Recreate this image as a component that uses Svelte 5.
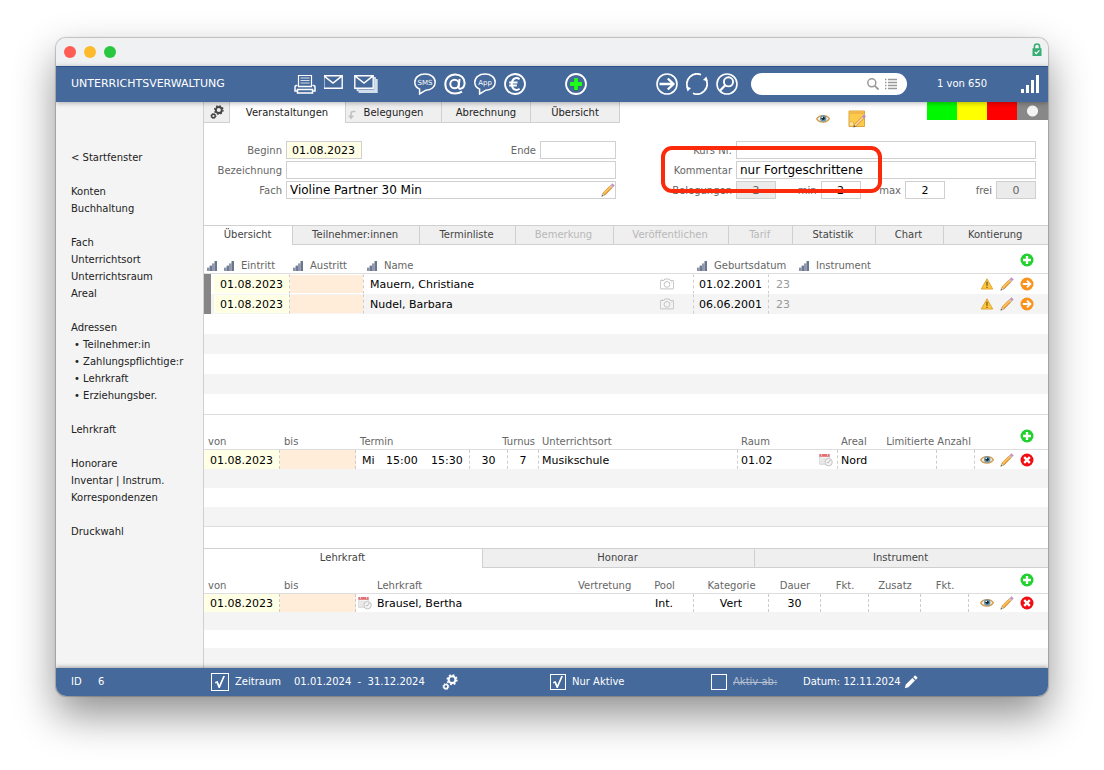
<script>
  const menu = [
    ['< Startfenster'],
    ['Konten', 'Buchhaltung'],
    ['Fach', 'Unterrichtsort', 'Unterrichtsraum', 'Areal'],
    ['Adressen', '• Teilnehmer:in', '• Zahlungspflichtige:r', '• Lehrkraft', '• Erziehungsber.'],
    ['Lehrkraft'],
    ['Honorare', 'Inventar | Instrum.', 'Korrespondenzen'],
    ['Druckwahl']
  ];

  const subTabs = [
    { name: 'Übersicht', size: 88 },
    { name: 'Teilnehmer:innen', size: 128 },
    { name: 'Terminliste', size: 96 },
    { name: 'Bemerkung', size: 98, disabled: true },
    { name: 'Veröffentlichen', size: 116, disabled: true },
    { name: 'Tarif', size: 63, disabled: true },
    { name: 'Statistik', size: 82 },
    { name: 'Chart', size: 68 },
    { name: 'Kontierung', size: 105 }
  ];

  const bottomTabs = [
    { name: 'Lehrkraft', size: 278 },
    { name: 'Honorar', size: 272 },
    { name: 'Instrument', size: 294 }
  ];

  const teilnehmer = [
    { eintritt: '01.08.2023', name: 'Mauern, Christiane', geburt: '01.02.2001', alter: 23 },
    { eintritt: '01.08.2023', name: 'Nudel, Barbara', geburt: '06.06.2001', alter: 23 }
  ];

  let subTab = $state('Übersicht');
  let bottomTab = $state('Lehrkraft');

  let suche = $state('');
  let kurs = $state({
    beginn: '01.08.2023',
    ende: '',
    bezeichnung: '',
    fach: 'Violine Partner 30 Min',
    nr: '',
    kommentar: 'nur Fortgeschrittene',
    min: '2',
    max: '2'
  });

  let zeitraum = $state(true);
  let nurAktive = $state(true);
  let aktivAb = $state(false);
</script>

{#snippet gears(size)}
  <svg width={size} height={size} viewBox="0 0 14 14" fill="none" stroke="currentColor">
    <circle cx="8.8" cy="5" r="3" stroke-width="1.8" />
    <circle cx="8.8" cy="5" r="4.2" stroke-width="1.4" stroke-dasharray="1.6 1.7" />
    <circle cx="3.4" cy="11" r="1.8" stroke-width="1.4" />
    <circle cx="3.4" cy="11" r="2.6" stroke-width="0.8" stroke-dasharray="1 1.04" />
  </svg>
{/snippet}

{#snippet sortBars()}
  <svg width="10" height="10" viewBox="0 0 10 10">
    <path d="M0 6.6h2.6V10H0z" fill="#8a93a8" />
    <path d="M2.6 4.6h2.4V10H2.600z" fill="#6f7a92" />
    <path d="M5 2.400h2.500V10H5z" fill="#8f98ac" />
    <path d="M7.500 0H10v10H7.500z" fill="#6b758d" />
  </svg>
{/snippet}

{#snippet plus()}
  <svg width="14" height="14" viewBox="0 0 14 14">
    <circle cx="7" cy="7" r="6.5" fill="#1fd12b" />
    <path d="M7 3v8M3 7h8" stroke="#fff" stroke-width="2.4" />
  </svg>
{/snippet}

{#snippet pencil()}
  <svg width="14" height="14" viewBox="0 0 14 14">
    <path d="M3 11 10.8 3.2" stroke="#cf7f22" stroke-width="3.2" />
    <path d="M2.8 10.8 10.600 3" stroke="#fdbf58" stroke-width="2" />
    <path d="M.8 13.2 1.9 10 4 12.1z" fill="#e9cda0" stroke="#a98a60" stroke-width=".5" />
    <path d="M.6 13.4 1.2 12l.8.8z" fill="#333" />
    <path d="m9.900 4.100 1-1" stroke="#c9c9c9" stroke-width="3.200" />
    <path d="m10.900 3.100 1.700-1.700" stroke="#c893bd" stroke-width="3.200" />
  </svg>
{/snippet}

{#snippet eye()}
  <svg width="14" height="14" viewBox="0 0 14 14">
    <path d="M.7 6.8C3 2.6 10.8 2.4 13.400 6.600 11 11 3.400 11.400.7 6.800z" fill="#f2efe8" stroke="#cf9a4c" stroke-width="1.300" />
    <circle cx="7.200" cy="6.500" r="3.200" fill="#6793a8" />
    <circle cx="7.200" cy="6.300" r="1.600" fill="#16222c" />
    <circle cx="6.300" cy="5.400" r=".7" fill="#fff" />
  </svg>
{/snippet}

{#snippet warning()}
  <svg width="14" height="14" viewBox="0 0 14 14">
    <path d="M7 1.8 12.7 12H1.3z" fill="#fcc63a" stroke="#e0a535" stroke-linejoin="round" />
    <path d="M7 4.8v4M7 9.8v1.3" stroke="#7d631f" stroke-width="1.4" />
  </svg>
{/snippet}

{#snippet goTo()}
  <svg width="14" height="14" viewBox="0 0 14 14" fill="none" stroke="#fff" stroke-width="1.8">
    <circle cx="7" cy="7" r="6.5" fill="#fb921c" stroke="none" />
    <path d="M2.8 7h7.400M7 3.600 10.400 7 7 10.400" />
  </svg>
{/snippet}

{#snippet remove()}
  <svg width="14" height="14" viewBox="0 0 14 14">
    <circle cx="7" cy="7" r="6.5" fill="#f10d14" />
    <path d="m4.200 4.200 5.600 5.600M9.800 4.200 4.200 9.800" stroke="#fff" stroke-width="2.400" />
  </svg>
{/snippet}

{#snippet calendar()}
  <svg width="14" height="14" viewBox="0 0 14 14">
    <path d="M.7 1.5h9.600v9.800H.7z" fill="#f2f2f2" stroke="#c9c9c9" stroke-width=".7" />
    <path d="M.4 1h10.200v2.800H.4z" fill="#df7173" />
    <path d="M2.500 1.200v1.300M8.500 1.200v1.300" stroke="#fff" stroke-width=".8" />
    <path d="M2 6h7M2 8h5M2 10h3" stroke="#d8d8d8" stroke-width=".8" />
    <circle cx="9.600" cy="9.200" r="3.700" fill="#f4f4f4" stroke="#bdbdbd" stroke-width=".9" />
    <path d="m11.200 7-1.600 2.600H7.800" fill="none" stroke="#aaa" stroke-width=".8" />
  </svg>
{/snippet}

{#snippet camera()}
  <svg width="14" height="14" viewBox="0 0 14 14" fill="none" stroke="#bdbdbd" stroke-width=".9">
    <path d="M1 3.500h2.800l1-1.500h4.400l1 1.500H13q.6 0 .6.600v7.200q0 .6-.6.600H1q-.6 0-.6-.6V4.100q0-.6.6-.6z" />
    <circle cx="7" cy="7.400" r="2.900" />
    <path d="M11.300 5.300h1M1.600 2.900h1.200" />
  </svg>
{/snippet}

{#snippet tabRow(tabs, active, pick)}
  <div class="tabs">
    {#each tabs as tab}
      <button
        class="tab"
        class:active={tab.name === active}
        disabled={tab.disabled}
        style:flex-grow={tab.size}
        onclick={() => pick(tab.name)}>{tab.name}</button>
    {/each}
  </div>
{/snippet}

<div class="window">
  <div class="titlebar">
    <span class="dot close"></span>
    <span class="dot minimize"></span>
    <span class="dot zoom"></span>
    <svg class="lock" width="10" height="13" viewBox="0 0 10 13">
      <path d="M2.4 6V3.600q0-2.600 2.600-2.600t2.600 2.600V6" fill="none" stroke="#35ad75" stroke-width="1.600" />
      <path d="M.5 5.200h9V13h-9z" fill="#35ad75" />
      <path d="m2.800 9 1.500 1.600L7.400 7.300" fill="none" stroke="#fff" stroke-width="1.200" />
    </svg>
  </div>

  <header class="toolbar">
    <h1>UNTERRICHTSVERWALTUNG</h1>

    <div class="tools print">
      <button aria-label="Drucken">
        <svg width="22" height="22" viewBox="0 0 22 22" fill="none" stroke="#fff">
          <path d="M4.500 13V2.500h13V13" stroke-width="1.200" />
          <path d="M6.500 5h9M6.500 7.500h9M6.500 10h9" stroke="#d3deed" stroke-width="1.200" />
          <path d="M3.500 12.500h-1q-1.500 0-1.500 1.500v4h2.500M18.500 12.500h1q1.500 0 1.500 1.500v4h-2.500M4 13.500h14" stroke-width="1.500" />
          <path d="M3.500 16.500h15v3.500h-15z" stroke-width="1.500" />
        </svg>
      </button>
      <button aria-label="E-Mail">
        <svg width="22" height="22" viewBox="1 0 22 22" fill="none" stroke="#fff" stroke-width="1.400">
          <path d="M.8 2.700h18.400v12.600H.8zM1.500 3.400 10 10l8.500-6.600" />
        </svg>
      </button>
      <button aria-label="Serienmail">
        <svg width="24" height="22" viewBox="0 0 24 22" fill="none" stroke="#fff" stroke-width="1.400">
          <path d="M20 5h1v12.300H3.500V16M21.800 7h1v12H5.500v-1.500" stroke="#d3deed" stroke-width="1.800" />
          <path d="M.8 2.700h18.400v12.600H.8zM1.500 3.400 10 10l8.500-6.600" />
        </svg>
      </button>
    </div>

    <div class="tools contact">
      <button aria-label="SMS">
        <svg width="22" height="22" viewBox="0 0 22 22">
          <path d="M11 1c6 0 10.200 3.400 10.200 8.200s-4.200 8-9.400 8L5.600 21v-4.900C2.600 14.800.8 12.500.8 9.200.8 4.400 5 1 11 1z" fill="none" stroke="#fff" stroke-width="1.500" />
          <text x="11" y="12" font-size="7" fill="#fff" text-anchor="middle">SMS</text>
        </svg>
      </button>
      <button aria-label="Adresse">
        <svg width="22" height="22" viewBox="0 0 22 22" fill="none" stroke="#fff" stroke-width="2">
          <circle cx="10.600" cy="11" r="4.300" />
          <path d="m15.600 6-1 7.200c-.2 2.300 1 2.800 2.400 2.400 2.200-.6 3.600-3 3.600-5.600C20.600 5 16.600 1.400 11.300 1.400 5.400 1.400 1.300 5.600 1.300 11.200c0 5.500 4 9.400 9.700 9.400 2.700 0 5-.6 7-1.900" />
        </svg>
      </button>
      <button aria-label="App">
        <svg width="22" height="22" viewBox="0 0 22 22">
          <path d="M11 1c6 0 10.200 3.400 10.200 8.200s-4.200 8-9.400 8L5.600 21v-4.900C2.600 14.800.8 12.500.8 9.200.8 4.400 5 1 11 1z" fill="none" stroke="#fff" stroke-width="1.500" />
          <text x="11" y="12" font-size="7" fill="#fff" text-anchor="middle">App</text>
        </svg>
      </button>
      <button aria-label="Honorar">
        <svg width="22" height="22" viewBox="0 0 22 22" fill="none" stroke="#fff">
          <circle cx="11" cy="11" r="10" stroke-width="1.800" />
          <path d="M15.600 6.200C12 3.600 7.800 5.800 7.800 11s4.200 7.400 7.800 4.800M5.200 9.500h8.300M5.200 12.500h7.600" stroke-width="2" />
        </svg>
      </button>
    </div>

    <div class="tools new">
      <button aria-label="Neu">
        <svg width="22" height="22" viewBox="0 0 22 22" fill="none">
          <circle cx="11" cy="11" r="10" stroke="#fff" stroke-width="1.800" />
          <path d="M11 5.200v12.300M5 11.400h12.500" stroke="#1d7d2b" stroke-width="4.200" />
          <path d="M11 5v12M5 11h12" stroke="#1ffb1b" stroke-width="3.800" />
        </svg>
      </button>
    </div>

    <div class="tools nav">
      <button aria-label="Weiter">
        <svg width="22" height="22" viewBox="0 0 22 22" fill="none" stroke="#fff">
          <circle cx="11" cy="11" r="10" stroke-width="1.600" />
          <path d="M3.500 11h14M11.800 5.500l5.700 5.500-5.700 5.500" stroke-width="2.300" />
        </svg>
      </button>
      <button aria-label="Aktualisieren">
        <svg width="22" height="22" viewBox="0 0 22 22" fill="none" stroke="#fff" stroke-width="1.700">
          <path d="M15 1.800A10 10 0 0 0 1.800 15M7 20.200A10 10 0 0 0 20.200 7" />
          <path d="m0 13.500 1.600 5L5 15zM22 8.500l-1.600-5L17 7z" fill="#fff" stroke="none" />
        </svg>
      </button>
      <button aria-label="Suchen">
        <svg width="22" height="22" viewBox="0 0 22 22" fill="none" stroke="#fff">
          <circle cx="11" cy="11" r="10" stroke-width="1.600" />
          <circle cx="12.500" cy="8.800" r="4.600" stroke-width="1.900" />
          <path d="m9.200 12.200-5 5.300" stroke-width="2.300" />
        </svg>
      </button>
    </div>

    <div class="search">
      <input type="text" aria-label="Suche" bind:value={suche} />
      <svg width="12" height="12" viewBox="0 0 12 12" fill="none" stroke="#999" stroke-width="1.500">
        <circle cx="4.800" cy="4.800" r="4" />
        <path d="m7.800 7.800 3.800 3.800" stroke-width="1.800" />
      </svg>
      <svg width="12" height="12" viewBox="0 0 12 12" stroke="#999" stroke-width="1.400">
        <path d="M0 1.500h1.500M0 4.500h1.500M0 7.500h1.500M0 10.500h1.500M3 1.500h9M3 4.500h9M3 7.500h9M3 10.500h9" />
      </svg>
    </div>

    <span class="count">1 von 650</span>

    <svg class="signal" width="20" height="20" viewBox="0 0 20 20" fill="#fff">
      <path d="M1 15h3v4H1zM6 11h3v8H6zM11 6h3v13h-3zM16 1h3v18h-3z" />
    </svg>
  </header>

  <div class="body">
    <nav class="sidebar">
      {#each menu as group}
        <ul>
          {#each group as item}
            <li><a href="#top" class:sub={item.startsWith('•')}>{item}</a></li>
          {/each}
        </ul>
      {/each}
    </nav>

    <main>
      <div class="top">
        <div class="top-tabs">
          <button class="gear" aria-label="Einstellungen">{@render gears(14)}</button>
          <button class="active">Veranstaltungen</button>
          <button class="linked">
            <svg width="8" height="10" viewBox="0 0 8 10">
              <path d="M7.500 1.500H5Q3 1.500 3 4v2" fill="none" stroke="#c2c2c2" stroke-width="1.600" />
              <path d="M0 5.500h6L3 9.500z" fill="#c2c2c2" />
            </svg>
            Belegungen
          </button>
          <button>Abrechnung</button>
          <button>Übersicht</button>
        </div>
        <div class="marks">
          {@render eye()}
          <svg width="18" height="18" viewBox="0 0 18 18">
            <path d="M1 1h15.500v15.500H1z" fill="#fdcb4c" stroke="#dba540" />
            <path d="M1.500 1.500h14.500v2.500H1.500z" fill="#f3b747" />
            <path d="M1.500 12h4v4h-4z" fill="#ffe596" stroke="#e0aa45" stroke-width=".6" />
            <path d="m7 15.500 8-8" stroke="#c98334" stroke-width="3" />
            <path d="m7 15.500 8-8" stroke="#fcd391" stroke-width="1.800" />
            <path d="m15 7.500 2-2" stroke="#b58fc9" stroke-width="3" />
            <path d="m5.400 17.400.6-2.400 1.800 1.800z" fill="#555" />
          </svg>
        </div>
        <div class="status">
          <span class="green"></span>
          <span class="yellow"></span>
          <span class="red"></span>
          <span class="none"></span>
        </div>
      </div>

      <form class="course" onsubmit={(e) => e.preventDefault()}>
        <label for="beginn">Beginn</label>
        <div class="split">
          <input id="beginn" class="date start" bind:value={kurs.beginn} />
          <label for="ende">Ende</label>
          <input id="ende" class="date" bind:value={kurs.ende} />
        </div>
        <label for="nr">Kurs Nr.</label>
        <input id="nr" bind:value={kurs.nr} />

        <label for="bezeichnung">Bezeichnung</label>
        <input id="bezeichnung" bind:value={kurs.bezeichnung} />
        <label for="kommentar">Kommentar</label>
        <input id="kommentar" bind:value={kurs.kommentar} />

        <label for="fach">Fach</label>
        <div class="with-icon">
          <input id="fach" bind:value={kurs.fach} />
          <button type="button" aria-label="Fach bearbeiten">{@render pencil()}</button>
        </div>
        <label for="belegungen">Belegungen</label>
        <div class="numbers">
          <input id="belegungen" value="2" readonly />
          <label for="min">min</label>
          <input id="min" bind:value={kurs.min} />
          <label for="max">max</label>
          <input id="max" bind:value={kurs.max} />
          <label for="frei">frei</label>
          <input id="frei" value="0" readonly />
        </div>
        <div class="highlight"></div>
      </form>

      {@render tabRow(subTabs, subTab, (name) => (subTab = name))}

      <table class="members">
        <colgroup>
          <col class="w10" /><col class="w76" /><col class="w74" /><col /><col class="w40" />
          <col class="w75" /><col class="w27" /><col class="w181" /><col class="w71" />
        </colgroup>
        <thead>
          <tr>
            <th colspan="2"><span class="sort">{@render sortBars()}{@render sortBars()}Eintritt</span></th>
            <th><span class="sort">{@render sortBars()}Austritt</span></th>
            <th colspan="2"><span class="sort">{@render sortBars()}Name</span></th>
            <th colspan="2"><span class="sort">{@render sortBars()}Geburtsdatum</span></th>
            <th><span class="sort">{@render sortBars()}Instrument</span></th>
            <th class="add"><button aria-label="Teilnehmer hinzufügen">{@render plus()}</button></th>
          </tr>
        </thead>
        <tbody>
          {#each teilnehmer as person}
            <tr>
              <td class="bar"></td>
              <td class="from dash">{person.eintritt}</td>
              <td class="to dash"></td>
              <td class="name">{person.name}</td>
              <td class="dash icon">{@render camera()}</td>
              <td class="dash birth">{person.geburt}</td>
              <td class="age">{person.alter}</td>
              <td></td>
              <td class="icon">
                <div class="actions">
                  <button aria-label="Warnung">{@render warning()}</button>
                  <button aria-label="Bearbeiten">{@render pencil()}</button>
                  <button aria-label="Öffnen">{@render goTo()}</button>
                </div>
              </td>
            </tr>
          {/each}
          {#each Array(5) as _}
            <tr><td colspan="9"></td></tr>
          {/each}
        </tbody>
      </table>

      <table class="dates">
        <colgroup>
          <col class="w76" /><col class="w76" /><col class="w26" /><col class="w45" /><col class="w43" />
          <col class="w38" /><col class="w31" /><col /><col class="w79" /><col class="w21" />
          <col class="w42" /><col class="w57" /><col class="w38" /><col class="w73" />
        </colgroup>
        <thead>
          <tr>
            <th>von</th>
            <th>bis</th>
            <th colspan="3">Termin</th>
            <th colspan="2" class="right">Turnus</th>
            <th class="place">Unterrichtsort</th>
            <th colspan="2" class="place">Raum</th>
            <th class="place">Areal</th>
            <th colspan="2" class="right">Limitierte Anzahl</th>
            <th class="add"><button aria-label="Termin hinzufügen">{@render plus()}</button></th>
          </tr>
        </thead>
        <tbody>
          <tr>
            <td class="from dash">01.08.2023</td>
            <td class="to dash"></td>
            <td class="name">Mi</td>
            <td>15:00</td>
            <td class="dash">15:30</td>
            <td class="dash center">30</td>
            <td class="dash center">7</td>
            <td class="dash place">Musikschule</td>
            <td class="place">01.02</td>
            <td class="dash icon">{@render calendar()}</td>
            <td colspan="2" class="dash place">Nord</td>
            <td class="dash"></td>
            <td class="icon">
              <div class="actions">
                <button aria-label="Anzeigen">{@render eye()}</button>
                <button aria-label="Bearbeiten">{@render pencil()}</button>
                <button aria-label="Löschen">{@render remove()}</button>
              </div>
            </td>
          </tr>
          {#each Array(3) as _}
            <tr><td colspan="14"></td></tr>
          {/each}
        </tbody>
      </table>

      <div class="bottom">
        {@render tabRow(bottomTabs, bottomTab, (name) => (bottomTab = name))}
      </div>

      <table class="teachers">
        <colgroup>
          <col class="w76" /><col class="w76" /><col class="w17" /><col /><col class="w61" />
          <col class="w59" /><col class="w75" /><col class="w52" /><col class="w48" />
          <col class="w52" /><col class="w48" /><col class="w79" />
        </colgroup>
        <thead>
          <tr>
            <th>von</th>
            <th>bis</th>
            <th></th>
            <th>Lehrkraft</th>
            <th class="center">Vertretung</th>
            <th class="center">Pool</th>
            <th class="center">Kategorie</th>
            <th class="center">Dauer</th>
            <th class="center">Fkt.</th>
            <th class="center">Zusatz</th>
            <th class="center">Fkt.</th>
            <th class="add"><button aria-label="Lehrkraft hinzufügen">{@render plus()}</button></th>
          </tr>
        </thead>
        <tbody>
          <tr>
            <td class="from dash">01.08.2023</td>
            <td class="to dash"></td>
            <td class="icon">{@render calendar()}</td>
            <td colspan="2">Brausel, Bertha</td>
            <td class="dash center">Int.</td>
            <td class="dash center">Vert</td>
            <td class="dash center">30</td>
            <td class="dash"></td>
            <td class="dash"></td>
            <td class="dash"></td>
            <td class="icon">
              <div class="actions">
                <button aria-label="Anzeigen">{@render eye()}</button>
                <button aria-label="Bearbeiten">{@render pencil()}</button>
                <button aria-label="Löschen">{@render remove()}</button>
              </div>
            </td>
          </tr>
          {#each Array(3) as _}
            <tr><td colspan="12"></td></tr>
          {/each}
        </tbody>
      </table>
    </main>
  </div>

  <footer>
    <span class="id">ID</span>
    <span class="id-value">6</span>
    <label class="period"><input type="checkbox" class="big" bind:checked={zeitraum} />Zeitraum</label>
    <span class="range">01.01.2024&nbsp; -&nbsp; 31.12.2024</span>
    <button class="settings" aria-label="Zeitraum einstellen">{@render gears(16)}</button>
    <label class="only-active"><input type="checkbox" bind:checked={nurAktive} />Nur Aktive</label>
    <label class="active-from"><input type="checkbox" bind:checked={aktivAb} /><s>Aktiv ab:</s></label>
    <span class="day">Datum: 12.11.2024</span>
    <button class="edit-day" aria-label="Datum bearbeiten">
      <svg width="14" height="14" viewBox="0 0 14 14" fill="#fff">
        <path d="M.8 13.200 1.800 9.600l6.600-6.600L11 5.600l-6.600 6.600zM9.200 2.200l1.400-1.400q.5-.5 1.100 0l1.500 1.500q.5.600 0 1.100l-1.400 1.400z" />
      </svg>
    </button>
  </footer>
</div>

<style>
  :global(body) {
    background: #fff;
  }

  .window,
  .window * {
    box-sizing: border-box;
  }

  .window {
    margin: 38px 56px 74px;
    border-radius: 10px;
    overflow: hidden;
    background: #fff;
    color: #222;
    font: 10px/12px "DejaVu Sans", Verdana, sans-serif;
    box-shadow: 0 0 1px 1px rgba(0, 0, 0, 0.2), 0 19px 42px rgba(0, 0, 0, 0.44);
  }

  button {
    font: inherit;
    color: inherit;
    background: none;
    border: 0;
    padding: 0;
    cursor: pointer;
  }

  svg {
    display: block;
    flex: none;
  }

  /* Titelleiste */
  .titlebar {
    display: flex;
    align-items: center;
    gap: 8px;
    height: 28px;
    padding: 0 6px 0 8px;
    background: #f0f1f3;
  }

  .dot {
    width: 12px;
    height: 12px;
    border-radius: 50%;
  }

  .close { background: #fe5d55; }
  .minimize { background: #fdba2c; }
  .zoom { background: #29c73f; }

  .lock {
    margin-left: auto;
    margin-bottom: 6px;
  }

  /* Werkzeugleiste */
  .toolbar {
    position: relative;
    z-index: 1;
    display: flex;
    align-items: center;
    height: 36px;
    padding: 0 8px 0 15px;
    background: #45699b;
    color: #fff;
    box-shadow: inset 0 1px #2b5288, 0 1px 5px rgba(0, 0, 0, 0.3);
  }

  h1 {
    flex: 0 0 223px;
    margin: 0;
    font-size: 11px;
    font-weight: normal;
  }

  .tools {
    display: flex;
    gap: 8px;
  }

  .contact { margin-left: 36px; }
  .new { margin-left: 39px; }
  .nav { margin-left: 69px; }

  .search {
    display: flex;
    align-items: center;
    flex: 0 1 156px;
    gap: 6px;
    height: 22px;
    margin-left: 13px;
    padding: 0 10px;
    border-radius: 11px;
    background: #fff;
  }

  .search input {
    flex: 1;
    width: 0;
    min-width: 0;
    border: 0;
    padding: 0;
    outline: none;
    background: none;
    font: inherit;
  }

  .count {
    margin-left: 30px;
    white-space: nowrap;
  }

  .signal {
    margin-left: auto;
  }

  .body {
    display: flex;
  }

  /* Navigation links */
  .sidebar {
    flex: 0 0 148px;
    padding: 47px 0 0 15px;
    border-right: 1px solid #d0d0d0;
    background: #f4f4f4;
  }

  ul {
    margin: 0 0 17px;
    padding: 0;
    list-style: none;
    line-height: 17px;
  }

  .sidebar a {
    color: #222;
    text-decoration: none;
    white-space: nowrap;
  }

  .sidebar .sub {
    padding-left: 3px;
  }

  main {
    flex: 1;
    min-width: 0;
  }

  .top {
    display: flex;
    align-items: flex-start;
    height: 39px;
  }

  .top-tabs {
    display: flex;
    height: 21px;
  }

  .top-tabs button {
    display: flex;
    align-items: center;
    justify-content: center;
    width: 89px;
    padding-top: 2px;
    border: solid #d0d0d0;
    border-width: 0 1px 1px 0;
    background: #efefef;
  }

  .top-tabs .gear {
    width: 26px;
    padding: 0;
    color: #444;
  }

  .top-tabs .active {
    width: 115px;
    border-color: transparent;
    background: #fff;
  }

  .top-tabs .linked {
    gap: 8px;
    width: 97px;
    padding-right: 16px;
    border-left-width: 1px;
  }

  .linked svg {
    margin-top: 4px;
  }

  .marks {
    display: flex;
    align-items: center;
    gap: 18px;
    margin-left: auto;
    padding-top: 8px;
  }

  .status {
    display: flex;
    margin-left: 61px;
  }

  .status span {
    width: 30px;
    height: 18px;
  }

  .green { background: #00f900; }
  .yellow { background: #ffff00; }
  .red { background: #ff0000; }

  .status .none {
    width: 31px;
    background: radial-gradient(circle, #f4f4f4 5px, #888 6px);
  }

  /* Kopfdaten */
  .course {
    position: relative;
    display: grid;
    grid-template-columns: 82px minmax(0, 1.1fr) 120px minmax(0, 1fr);
    grid-auto-rows: 18px;
    gap: 2px 0;
    margin: 0;
    padding: 0 12px 26px 0;
  }

  .course label {
    padding-right: 4px;
    color: #666;
    line-height: 20px;
    text-align: right;
  }

  .course input {
    width: 100%;
    height: 18px;
    padding: 0 3px;
    border: 1px solid #d0d0d0;
    border-radius: 0;
    background: #fff;
    color: #000;
    font: 12px/16px "DejaVu Sans", Verdana, sans-serif;
  }

  .split {
    display: flex;
  }

  .split label {
    margin-left: auto;
  }

  .course .date {
    width: 76px;
    font-size: 11px;
  }

  .course .start {
    padding: 0 5px;
    background: #ffffe6;
  }

  .with-icon {
    display: flex;
  }

  .with-icon button {
    margin: 2px 1px 2px -15px;
  }

  .numbers {
    display: grid;
    grid-template-columns: 40px 1fr 40px 1fr 40px 51px 40px;
  }

  .course .numbers input {
    font-size: 11px;
    text-align: center;
  }

  .course .numbers input[readonly] {
    background: #ebebeb;
    color: #666;
  }

  .highlight {
    position: absolute;
    top: 5px;
    right: 166px;
    width: 221px;
    height: 47px;
    border: 4px solid #fb2a0b;
    border-radius: 11px;
    pointer-events: none;
  }

  /* Reiter */
  .tabs {
    display: flex;
    height: 20px;
    border-top: 1px solid #d0d0d0;
  }

  .tab {
    flex: 1 1 0;
    min-width: 0;
    padding-right: 2px;
    border: solid #d0d0d0;
    border-width: 0 0 1px 1px;
    background: #efefef;
    color: #444;
    white-space: nowrap;
  }

  .tab.active {
    border-color: transparent;
    background: #fff;
  }

  .tab:disabled {
    color: #b8b8b8;
  }

  /* Listen */
  table {
    width: 100%;
    table-layout: fixed;
    border-collapse: separate;
    border-spacing: 0;
  }

  .w10 { width: 10px; }
  .w17 { width: 17px; }
  .w21 { width: 21px; }
  .w26 { width: 26px; }
  .w27 { width: 27px; }
  .w31 { width: 31px; }
  .w38 { width: 38px; }
  .w40 { width: 40px; }
  .w42 { width: 42px; }
  .w43 { width: 43px; }
  .w45 { width: 45px; }
  .w48 { width: 48px; }
  .w52 { width: 52px; }
  .w57 { width: 57px; }
  .w59 { width: 59px; }
  .w61 { width: 61px; }
  .w71 { width: 71px; }
  .w73 { width: 73px; }
  .w74 { width: 74px; }
  .w75 { width: 75px; }
  .w76 { width: 76px; }
  .w79 { width: 79px; }
  .w181 { width: 181px; }

  th {
    padding: 0 4px 1px;
    border-bottom: 1px solid #dedede;
    color: #666;
    font-weight: normal;
    text-align: left;
    vertical-align: bottom;
    white-space: nowrap;
  }

  td {
    padding: 2px 4px 0;
    color: #000;
    font-size: 11px;
    line-height: 16px;
    white-space: nowrap;
  }

  tbody tr:nth-child(even) {
    background: #f4f4f4;
  }

  .sort {
    display: flex;
    align-items: center;
    gap: 7px;
  }

  .members th {
    padding-left: 3px;
  }

  th.add {
    padding: 0 14px 6px 0;
  }

  .add button {
    display: block;
    margin-left: auto;
  }

  .center {
    text-align: center;
  }

  .right {
    text-align: right;
  }

  .dash {
    border-right: 1px dashed #ccc;
  }

  .from {
    padding-left: 6px;
    background: #ffffe6;
  }

  .to {
    background: #ffecd9;
  }

  .name {
    padding-left: 6px;
  }

  .place {
    padding-left: 3px;
  }

  .birth {
    padding-left: 5px;
  }

  .age {
    padding-left: 7px;
    color: #999;
  }

  .icon {
    padding: 0 2px;
  }

  .actions {
    display: flex;
    justify-content: flex-end;
    gap: 6px;
    padding-right: 12px;
  }

  .members {
    border-bottom: 1px solid #dedede;
  }

  .members thead tr { height: 29px; }
  .members tbody tr { height: 20px; }

  /* farbige Felder lassen oben und unten einen Pixel frei */
  .members .from,
  .members .to,
  .members .dash {
    border-top: 1px solid transparent;
    border-bottom: 1px solid transparent;
    background-clip: padding-box;
  }

  .members .dash.icon {
    padding-left: 6px;
  }

  .members .bar {
    background: linear-gradient(90deg, #858585 7px, transparent 7px);
  }

  .dates {
    border-bottom: 1px solid #dedede;
  }

  .dates thead tr { height: 35px; }
  .dates tbody tr { height: 19px; }

  .bottom {
    margin-top: 21px;
  }

  .teachers {
    padding-bottom: 2px;
    background: linear-gradient(0deg, #f4f4f4 2px, transparent 2px);
  }

  .teachers thead tr { height: 26px; }
  .teachers tbody tr { height: 18px; }

  /* Fußleiste */
  footer {
    position: relative;
    display: flex;
    align-items: center;
    height: 28px;
    padding: 0 15px;
    background: #45699b;
    color: #fff;
    line-height: 14px;
    white-space: nowrap;
    box-shadow: 0 -1px 4px rgba(0, 0, 0, 0.35);
  }

  footer label {
    display: flex;
    align-items: center;
    gap: 6px;
  }

  footer s {
    color: #b5bfce;
  }

  footer input {
    appearance: none;
    display: grid;
    place-items: center;
    width: 16px;
    height: 16px;
    margin: 0;
    border: 1px solid #fff;
  }

  footer .big {
    width: 18px;
    height: 18px;
  }

  footer input:checked::before {
    content: "";
    width: 10px;
    height: 12px;
    background: #fff;
    clip-path: polygon(0 50%, 26% 42%, 43% 74%, 82% 0, 100% 0, 48% 100%, 36% 100%, 16% 58%, 4% 62%);
  }

  .id { width: 27px; }
  .id-value { width: 113px; }
  .period { width: 83px; }
  .range { width: 148px; }
  .settings { width: 108px; }
  .only-active { width: 161px; }
  .active-from { width: 92px; }
  .edit-day { margin-left: 3px; }
</style>
